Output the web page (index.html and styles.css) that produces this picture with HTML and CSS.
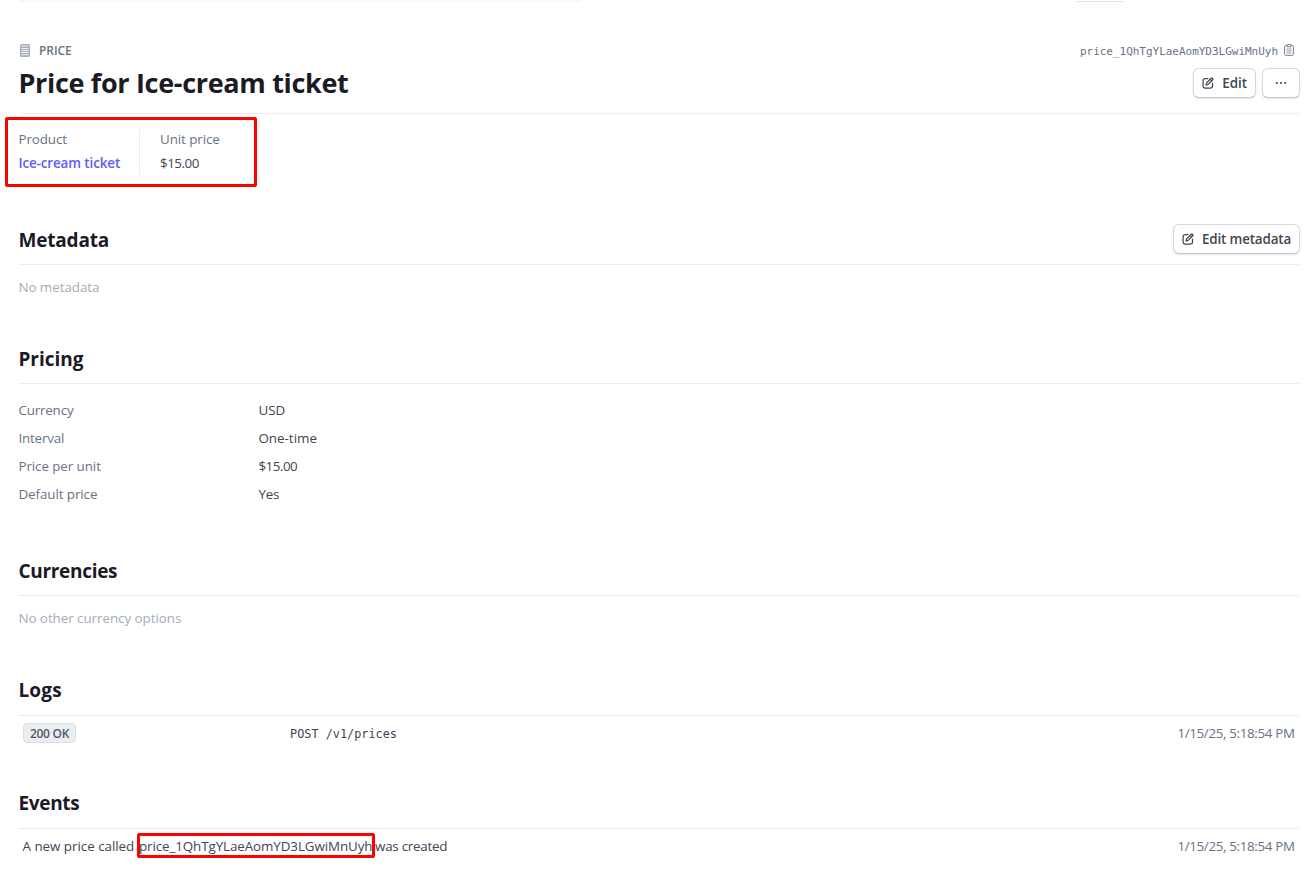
FILE: index.html
```html
<!DOCTYPE html>
<html lang="en">
<head>
<meta charset="utf-8">
<title>Price for Ice-cream ticket</title>
<link rel="stylesheet" href="styles.css">
</head>
<body>
<svg width="0" height="0" class="defs">
  <symbol id="pencil" viewBox="0 0 12 12">
    <path d="M6 1.6H3A1.9 1.9 0 0 0 1.1 3.5v5.6A1.9 1.9 0 0 0 3 11h5.6a1.9 1.9 0 0 0 1.9-1.9V6.2M4.1 8l.5-2.1L9.2 1.2a.8.8 0 0 1 1.2 0l.4.4a.8.8 0 0 1 0 1.2L6.2 7.4zM8.2 2.3l1.6 1.6" fill="none" stroke="currentColor" stroke-width="1.25" stroke-linejoin="round" stroke-linecap="round"/>
  </symbol>
</svg>
<main class="page">
  <div class="topbar"><span class="search-edge"></span><span class="button-edge"></span></div>
  <div class="eyebrow">
    <span class="kind">
      <svg width="10" height="13" viewBox="0 0 10 13"><rect width="10" height="13" rx="1.6" fill="#a8b0bd"/><path d="M1.5 2h7M1.5 4.5h7M1.5 6.5h7M1.5 8.5h7M1.5 10.7h7" stroke="#f0f2f5" stroke-width="1.1"/></svg>
      <span class="kind-label">PRICE</span>
    </span>
    <span class="id"><span class="id-text">price_1QhTgYLaeAomYD3LGwiMnUyh</span>
      <svg width="10" height="12" viewBox="0 0 10 12" fill="none" stroke="#7a8494"><rect x=".6" y="1.6" width="8.8" height="9.8" rx="1.2"/><path d="M3 .6h4v2.2H3z" fill="#fff"/><path d="M2.5 5h5M2.5 7h5M2.5 9h5" stroke-width=".8"/></svg>
    </span>
  </div>
  <header class="title-row">
    <h1>Price for Ice-cream ticket</h1>
    <div class="actions">
      <button class="btn"><svg class="pencil"><use href="#pencil"/></svg><span class="t-edit">Edit</span></button>
      <button class="btn more" aria-label="More"><svg width="12" height="4" viewBox="0 0 12 4" fill="#414552"><circle cx="1.8" cy="2" r="1.1"/><circle cx="6" cy="2" r="1.1"/><circle cx="10.2" cy="2" r="1.1"/></svg></button>
    </div>
  </header>
  <div class="summary">
    <div class="fact product"><span class="label t-product">Product</span><a class="link">Ice-cream ticket</a></div>
    <div class="fact unit"><span class="label t-unit">Unit price</span><span class="t-amount">$15.00</span></div>
    <span class="mark mark-summary"></span>
  </div>
  <section class="metadata">
    <div class="head"><h2 class="h-metadata">Metadata</h2><button class="btn"><svg class="pencil"><use href="#pencil"/></svg><span class="t-editmeta">Edit metadata</span></button></div>
    <p class="empty t-nometa">No metadata</p>
  </section>
  <section class="pricing">
    <div class="head"><h2 class="h-pricing">Pricing</h2></div>
    <dl>
      <dt class="t-currency">Currency</dt><dd class="t-usd">USD</dd>
      <dt class="t-interval">Interval</dt><dd class="t-onetime">One-time</dd>
      <dt class="t-perunit">Price per unit</dt><dd class="t-amount">$15.00</dd>
      <dt class="t-default">Default price</dt><dd class="t-yes">Yes</dd>
    </dl>
  </section>
  <section class="currencies">
    <div class="head"><h2 class="h-currencies">Currencies</h2></div>
    <p class="empty t-nocurr">No other currency options</p>
  </section>
  <section class="logs">
    <div class="head tall"><h2 class="h-logs">Logs</h2></div>
    <div class="row"><span class="status"><span class="badge">200 OK</span></span><code>POST /v1/prices</code><time>1/15/25, 5:18:54 PM</time></div>
  </section>
  <section class="events">
    <div class="head tall"><h2 class="h-events">Events</h2></div>
    <div class="row"><span class="event"><span class="e1">A new price called</span><span class="e2">price_1QhTgYLaeAomYD3LGwiMnUyh<span class="mark mark-event"></span></span><span class="e3">was created</span></span><time>1/15/25, 5:18:54 PM</time></div>
  </section>
</main>
</body>
</html>
```
FILE: styles.css
```css
* { box-sizing: border-box; }
body { margin: 0; background: #fff; color: #414552; font: 13.4px/20px "Open Sans", "Noto Sans", sans-serif; }
.defs { position: absolute; }
.page { height: 884px; padding: 0 15px 0 19px; overflow: hidden; white-space: nowrap; }
h1, h2, p, dl, dd { margin: 0; }
h1, h2, p, dl, .product { text-indent: -.6px; }
.topbar { height: 40px; display: flex; justify-content: space-between; padding-right: 174px; }
.search-edge { width: 563px; height: 2px; background: #f8f8f9; border-radius: 0 0 6px 6px; }
.button-edge { width: 50px; height: 2px; border-bottom: 1px solid #e3e4e7; border-radius: 0 0 6px 6px; }
.eyebrow { height: 28px; display: flex; justify-content: space-between; align-items: flex-start; padding: 0 5px 0 1px; }
.kind, .id { display: flex; align-items: center; height: 20px; }
.kind { gap: 9px; color: #687385; font-size: 12px; font-weight: 600; }
.kind-label { letter-spacing: -.05px; padding-top: 1px; }
.id { gap: 6px; }
.id-text { font: 11px/20px "DejaVu Sans Mono", monospace; letter-spacing: -.02px; color: #687385; padding-top: 3px; }
.title-row { height: 46px; display: flex; justify-content: space-between; border-bottom: 1px solid #ebeef1; }
h1 { font-size: 27px; line-height: 30px; font-weight: 700; color: #1a1b25; letter-spacing: -.32px; }
.actions { display: flex; gap: 6px; margin-right: -1px; }
.btn { height: 30px; display: flex; align-items: center; justify-content: center; gap: 8px; padding: 0 8px; border: 1px solid #d5d8dc; border-bottom-color: #c3c6cc; border-radius: 6px; background: #fff; box-shadow: 0 1px 2px rgba(64,68,82,.14); color: #414552; font: 600 13.4px/20px "Open Sans", "Noto Sans", sans-serif; }
.btn.more { width: 38px; padding: 0; }
.pencil { width: 12px; height: 12px; flex: none; }
.t-editmeta { letter-spacing: -.16px; }
.summary { position: relative; height: 110px; padding-top: 15px; display: flex; align-items: flex-start; }
.fact { display: flex; flex-direction: column; gap: 4px; height: 46px; }
.product { width: 121px; border-right: 1px solid #ebeef1; }
.unit { padding-left: 20px; }
.label, dt { color: #687385; }
.link { color: #625afa; font-weight: 600; letter-spacing: -.1px; }
.t-product, .t-unit, .t-default, .t-perunit { letter-spacing: -.08px; }
.t-amount { letter-spacing: -.5px; }
.t-currency, .t-interval, .t-yes { letter-spacing: -.18px; }
.mark { position: absolute; border: 3px solid #fe0000; border-radius: 2px; }
.mark-summary { left: -14px; top: 3px; width: 252px; height: 70px; }
.head { height: 40px; display: flex; justify-content: space-between; border-bottom: 1px solid #ebeef1; }
.metadata .head, .tall { height: 41px; }
.head .btn { margin-right: -1px; }
h2 { font-size: 19px; line-height: 31px; font-weight: 700; color: #1a1b25; }
.h-metadata { letter-spacing: -.18px; line-height: 32px; }
.h-currencies { letter-spacing: -.3px; }
.h-logs { letter-spacing: .2px; }
.h-events { letter-spacing: -.3px; }
.empty { color: #a3acba; padding-top: 12px; letter-spacing: -.05px; }
.metadata { height: 120px; }
.pricing { height: 212px; }
.currencies { height: 119px; }
.logs { height: 113px; }
dl { display: grid; grid-template-columns: 240px 1fr; grid-auto-rows: 28px; line-height: 28px; padding-top: 12px; }
.row { display: flex; align-items: center; height: 20px; margin-top: 7px; padding: 0 5px 0 4px; }
.status { width: 267px; display: flex; }
.badge { width: 53px; height: 20px; text-align: center; border: 1px solid #d8dee4; border-radius: 4px; background: #ebeef1; color: #545969; font-size: 12px; font-weight: 600; line-height: 20px; letter-spacing: -.3px; }
code { font: 11.8px/20px "DejaVu Sans Mono", monospace; letter-spacing: .03px; padding-top: 1px; }
time { margin-left: auto; color: #687385; letter-spacing: -.35px; margin-right: -.7px; }
.event { display: flex; }
.e1 { width: 116px; text-indent: -.5px; letter-spacing: -.03px; }
.e2 { width: 236px; position: relative; letter-spacing: -.1px; }
.e3 { letter-spacing: -.25px; }
.mark-event { left: -2px; top: -3px; width: 238px; height: 25px; }
```
